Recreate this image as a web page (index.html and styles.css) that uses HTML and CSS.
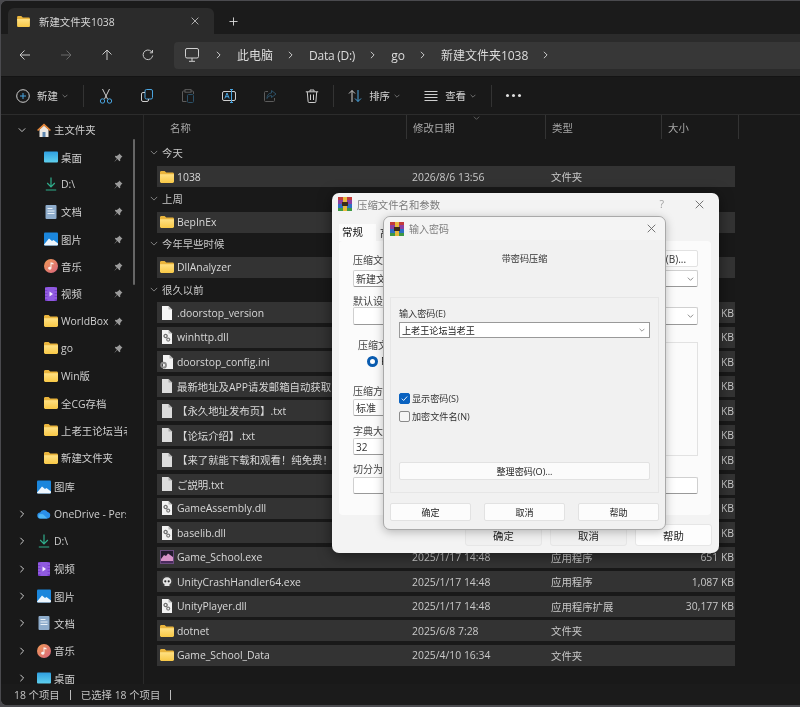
FILE: index.html
```html
<!DOCTYPE html>
<html lang="zh-CN">
<head>
  <meta charset="UTF-8" />
  <meta name="viewport" content="width=device-width, initial-scale=1.0"/>
  <title>新建文件夹1038</title>
  <link rel="stylesheet" href="styles.css">
</head>
<body>

  <!-- shared icons -->
  <svg class="sprite" aria-hidden="true">
    <defs>
      <linearGradient id="skyGrad" x1="0" y1="0" x2="0" y2="1"><stop offset="0" stop-color="#2f9fe0"/><stop offset="1" stop-color="#5fd0ee"/></linearGradient>
      <linearGradient id="musicGrad" x1="0" y1="0" x2="1" y2="1"><stop offset="0" stop-color="#f09a55"/><stop offset="1" stop-color="#d8647e"/></linearGradient>
      <linearGradient id="folderGrad" x1="0" y1="0" x2="0" y2="1"><stop offset="0" stop-color="#ffe184"/><stop offset="1" stop-color="#f8c846"/></linearGradient>
    </defs>
    <symbol id="folder" viewBox="0 0 14 12">
      <path d="M0 1.400C0 .6.6 0 1.400 0h3.200l1.600 1.500h6.400c.8 0 1.400.6 1.400 1.400V5H0z" fill="#e9b43c"/>
      <path d="M0 3.200h14v7.400c0 .8-.6 1.400-1.400 1.400H1.400C.6 12 0 11.400 0 10.600z" fill="url(#folderGrad)"/>
    </symbol>
    <symbol id="file" viewBox="0 0 12 14">
      <path d="M1 0h6.500L11 3.500V14H1z" fill="#f7f7f7"/>
      <path d="M7.500 0v3.500H11z" fill="#bdbdbd"/>
    </symbol>
    <symbol id="txt" viewBox="0 0 12 14">
      <path d="M1 0h6.500L11 3.500V14H1z" fill="#dcdcdc"/>
      <path d="M7.500 0v3.500H11z" fill="#a9a9a9"/>
    </symbol>
    <symbol id="dll" viewBox="0 0 12 14">
      <path d="M1 0h6.500L11 3.500V14H1z" fill="#f2f2f2"/>
      <path d="M7.500 0v3.500H11z" fill="#b5b5b5"/>
      <circle cx="4.600" cy="6" r="1.600" fill="none" stroke="#6d6d6d" stroke-width="1.300"/>
      <circle cx="7.200" cy="9.600" r="1.500" fill="none" stroke="#7d7d7d" stroke-width="1.200"/>
    </symbol>
    <symbol id="ini" viewBox="0 0 14 14">
      <path d="M3 0h6.500L13 3.500V14H3z" fill="#f2f2f2"/>
      <path d="M9.500 0v3.500H13z" fill="#b5b5b5"/>
      <circle cx="3.600" cy="10.200" r="2.400" fill="none" stroke="#8b8b8b" stroke-width="1.900"/>
    </symbol>
    <symbol id="game" viewBox="0 0 14 14">
      <rect x=".5" y=".5" width="13" height="13" fill="#231a2e" stroke="#6b4a7e"/>
      <path d="M1 9l3-4 2 1 2-2.500L13 7v4H1z" fill="#d793c8"/>
      <rect x="1" y="11" width="12" height="2" fill="#4a2a5e"/>
    </symbol>
    <symbol id="skull" viewBox="0 0 14 14">
      <circle cx="7" cy="6.600" r="6.400" fill="#3a3a3a"/>
      <path d="M7 2.200c-2.700 0-4.300 1.800-4.300 4 0 1.500.7 2.500 1.800 3.100V11h5V9.300c1.100-.6 1.800-1.600 1.800-3.100 0-2.200-1.600-4-4.300-4z" fill="#e4e4e4"/>
      <circle cx="5.300" cy="6.300" r="1.100" fill="#2c2c2c"/>
      <circle cx="8.700" cy="6.300" r="1.100" fill="#2c2c2c"/>
    </symbol>
    <symbol id="pin" viewBox="0 0 10 10">
      <path d="M5.800.6l3.600 3.600-1.100.5-1.500 2.300.2 1.500-1 .6L3.700 6.800.9 9.400.6 9.100l2.600-2.800L1 4.100l.6-1 1.500.2 2.300-1.500z" fill="#9a9a9a"/>
    </symbol>
    <symbol id="desktop" viewBox="0 0 14 11">
      <rect width="14" height="11" rx="1" fill="url(#skyGrad)"/>
    </symbol>
    <symbol id="download" viewBox="0 0 12 14">
      <path d="M6 .5v9M2.200 6L6 9.800 9.800 6M.8 13h10.400" fill="none" stroke="#2fae8c" stroke-width="1.200"/>
    </symbol>
    <symbol id="docs" viewBox="0 0 12 14">
      <rect x=".5" width="11" height="14" rx="1" fill="#8eaccb"/>
      <path d="M2.500 3.500h5M2.500 6h7M2.500 8.500h7" stroke="#e9f1f8" stroke-width="1"/>
    </symbol>
    <symbol id="pictures" viewBox="0 0 14 13">
      <rect width="14" height="13" rx="1" fill="#1b86dc"/>
      <path d="M0 12l5-6 3 2.500 1.500-1L14 11v1a1 1 0 0 1-1 1H1a1 1 0 0 1-1-1z" fill="#eef6fd"/>
    </symbol>
    <symbol id="music" viewBox="0 0 14 14">
      <circle cx="7" cy="7" r="7" fill="url(#musicGrad)"/>
      <path d="M6.500 3.200l3 .8v1.500l-2-.5v4.300a1.700 1.500 0 1 1-1-1.400z" fill="#f7f0ee"/>
    </symbol>
    <symbol id="video" viewBox="0 0 12 14">
      <rect width="12" height="14" rx="1" fill="#7a3fd0"/>
      <path d="M0 2h12M0 5h12M0 8h12M0 11h12" stroke="#b68cf0" stroke-width=".8"/>
      <rect x="2.400" width="7.200" height="14" fill="#8f5ae0"/>
      <path d="M4.500 4.500l3.500 2.500-3.500 2.500z" fill="#f3ecfd"/>
    </symbol>
    <symbol id="home" viewBox="0 0 14 14">
      <path d="M2.500 6.500L7 2.500l4.500 4V14h-9z" fill="#ece8e2"/>
      <path d="M5.500 9h3v5h-3z" fill="#5e87b0"/>
      <path d="M0 7l7-6.500L14 7l-1.200 1L7 2.800 1.200 8z" fill="#e8883a"/>
    </symbol>
    <symbol id="cloud" viewBox="0 0 14 10">
      <path d="M3.500 9.500a3 3 0 0 1-.4-6A4.200 4.200 0 0 1 10.600 3a3.300 3.300 0 0 1-.3 6.500z" fill="#2a8fe8"/>
      <path d="M3.500 9.500a2.200 2.200 0 0 1 0-4.400l2.500.2 4.500 4.200z" fill="#4fb6f5"/>
    </symbol>
    <symbol id="rar" viewBox="0 0 14 14">
      <rect width="14" height="3" y="0" fill="#c33a3a"/>
      <rect width="14" height="4" y="3" fill="#8b3fa0"/>
      <rect width="14" height="4" y="7" fill="#2f6ec4"/>
      <rect width="14" height="3" y="11" fill="#3f9a44"/>
      <rect x="5" width="4" height="14" fill="#e8b93d"/>
      <rect x="4" y="5" width="6" height="4" fill="#3b2a1a"/>
    </symbol>
    <symbol id="close" viewBox="0 0 10 10">
      <path d="M.8.8l8.400 8.400M9.200.8L.8 9.200" fill="none" stroke="currentColor" stroke-width="1"/>
    </symbol>
    <symbol id="chev-right" viewBox="0 0 6 10">
      <path d="M1 1l4 4-4 4" fill="none" stroke="currentColor" stroke-width="1.200"/>
    </symbol>
    <symbol id="chev-down" viewBox="0 0 10 6">
      <path d="M1 1l4 4 4-4" fill="none" stroke="currentColor" stroke-width="1.100"/>
    </symbol>
  </svg>

  <div class="window">

    <div class="titlebar">
      <div class="tab">
        <svg class="tab-icon"><use href="#folder"/></svg>
        <span class="tab-text">新建文件夹1038</span>
        <svg class="tab-close"><use href="#close"/></svg>
      </div>
      <svg class="tab-add" viewBox="0 0 10 10"><path d="M5 .5v9M.5 5h9" fill="none" stroke="#ddd" stroke-width="1"/></svg>
    </div>

    <div class="navbar">
      <div class="nav-btn">
        <svg viewBox="0 0 12 12"><path d="M11 6H1M5.500 1.500L1 6l4.500 4.500" fill="none" stroke="#c8c8c8" stroke-width="1"/></svg>
      </div>
      <div class="nav-btn">
        <svg viewBox="0 0 12 12"><path d="M1 6h10M6.500 1.500L11 6l-4.500 4.500" fill="none" stroke="#6a6a6a" stroke-width="1"/></svg>
      </div>
      <div class="nav-btn">
        <svg viewBox="0 0 12 12"><path d="M6 11V1M1.500 5.500L6 1l4.500 4.500" fill="none" stroke="#c8c8c8" stroke-width="1"/></svg>
      </div>
      <div class="nav-btn">
        <svg viewBox="0 0 12 12"><path d="M10.700 6.500A4.800 4.800 0 1 1 9.200 2.300L10.500 3.600M10.500 1v2.800H7.800" fill="none" stroke="#c8c8c8" stroke-width="1"/></svg>
      </div>
      <div class="address">
        <svg class="addr-pc" viewBox="0 0 14 14"><rect x=".5" y=".5" width="13" height="9.500" rx="1.500" fill="none" stroke="#d0d0d0"/><path d="M7 10v3M4 13.300h6" stroke="#d0d0d0"/></svg>
        <svg class="addr-chev"><use href="#chev-right"/></svg>
        <span>此电脑</span>
        <svg class="addr-chev"><use href="#chev-right"/></svg>
        <span class="addr-tight">Data (D:)</span>
        <svg class="addr-chev"><use href="#chev-right"/></svg>
        <span>go</span>
        <svg class="addr-chev"><use href="#chev-right"/></svg>
        <span>新建文件夹1038</span>
        <svg class="addr-chev"><use href="#chev-right"/></svg>
      </div>
    </div>

    <div class="toolbar">
      <div class="tool-text tool-new">
        <svg class="tool-ico" viewBox="0 0 14 14"><circle cx="7" cy="7" r="6.300" fill="none" stroke="#cfcfcf"/><path d="M7 4v6M4 7h6" stroke="#4aa5e0"/></svg>
        <span>新建</span>
        <svg class="tool-chev"><use href="#chev-down"/></svg>
      </div>
      <div class="tool-sep"></div>
      <div class="tool-btn">
        <svg viewBox="0 0 14 16"><path d="M3.500 1l5 10M10.500 1l-5 10" fill="none" stroke="#cfcfcf"/><circle cx="3.500" cy="13" r="2.200" fill="none" stroke="#4aa5e0"/><circle cx="10.500" cy="13" r="2.200" fill="none" stroke="#4aa5e0"/></svg>
      </div>
      <div class="tool-btn">
        <svg viewBox="0 0 14 14"><rect x="5" y=".5" width="7.500" height="9.500" rx="1.500" fill="none" stroke="#4aa5e0"/><path d="M5 3.500H3A1.500 1.500 0 0 0 1.500 5v6A1.500 1.500 0 0 0 3 12.500h4A1.500 1.500 0 0 0 8.500 11v-1" fill="none" stroke="#cfcfcf"/></svg>
      </div>
      <div class="tool-btn">
        <svg viewBox="0 0 14 14"><path d="M4 2H2.500A1 1 0 0 0 1.500 3v9.500h4M10 2h1.500a1 1 0 0 1 1 1v2" fill="none" stroke="#5c5c5c"/><rect x="4" y=".6" width="6" height="2.600" fill="none" stroke="#5c5c5c"/><rect x="6.500" y="5.500" width="6" height="8" rx="1" fill="none" stroke="#2c5168"/></svg>
      </div>
      <div class="tool-btn">
        <svg viewBox="0 0 14 14"><rect x=".5" y="2.500" width="13" height="9" rx="1.500" fill="none" stroke="#cfcfcf"/><path d="M9.500 .5v13M8 .5h3M8 13.500h3" stroke="#4aa5e0" fill="none"/><path d="M2.800 9.500L5 4l2.200 5.500M3.600 7.700h2.800" fill="none" stroke="#4aa5e0"/></svg>
      </div>
      <div class="tool-btn">
        <svg viewBox="0 0 14 14"><path d="M5 2.500H2.500a1 1 0 0 0-1 1v8a1 1 0 0 0 1 1h8a1 1 0 0 0 1-1V9" fill="none" stroke="#5c5c5c"/><path d="M8.500 1.500l4.500 3.500-4.500 3.500V6.500c-2 0-3.500 1-4.500 3 0-3 1.500-5.500 4.500-5.500z" fill="none" stroke="#2c5168"/></svg>
      </div>
      <div class="tool-btn">
        <svg viewBox="0 0 14 14"><path d="M.8 2.800h12.400M5 2.500V1h4v1.500M2.300 3l.8 9.500a1 1 0 0 0 1 1h5.800a1 1 0 0 0 1-1l.8-9.500M5.500 5.500v5.500M8.500 5.500v5.500" fill="none" stroke="#cfcfcf"/></svg>
      </div>
      <div class="tool-sep"></div>
      <div class="tool-text tool-sort">
        <svg class="tool-ico" viewBox="0 0 14 14"><path d="M4 13V1.500M1 4.500l3-3 3 3" fill="none" stroke="#cfcfcf"/><path d="M10 1v11.500M7 9.500l3 3 3-3" fill="none" stroke="#4aa5e0"/></svg>
        <span>排序</span>
        <svg class="tool-chev"><use href="#chev-down"/></svg>
      </div>
      <div class="tool-text tool-view">
        <svg class="tool-ico" viewBox="0 0 14 14"><path d="M.5 2.500h13M.5 5.500h13M.5 8.500h13M.5 11.500h13" stroke="#cfcfcf"/></svg>
        <span>查看</span>
        <svg class="tool-chev"><use href="#chev-down"/></svg>
      </div>
      <div class="tool-sep"></div>
      <div class="tool-more"><i></i><i></i><i></i></div>
    </div>

    <div class="main">
      <div class="sidebar">
        <div class="scroll-thumb"></div>

        <div class="side-row"><svg class="side-chev"><use href="#chev-down"/></svg><svg class="side-ico"><use href="#home"/></svg><span class="side-label">主文件夹</span></div>

        <div class="side-row sub"><svg class="side-ico"><use href="#desktop"/></svg><span class="side-label">桌面</span><svg class="side-pin"><use href="#pin"/></svg></div>
        <div class="side-row sub"><svg class="side-ico"><use href="#download"/></svg><span class="side-label">D:\</span><svg class="side-pin"><use href="#pin"/></svg></div>
        <div class="side-row sub"><svg class="side-ico"><use href="#docs"/></svg><span class="side-label">文档</span><svg class="side-pin"><use href="#pin"/></svg></div>
        <div class="side-row sub"><svg class="side-ico"><use href="#pictures"/></svg><span class="side-label">图片</span><svg class="side-pin"><use href="#pin"/></svg></div>
        <div class="side-row sub"><svg class="side-ico"><use href="#music"/></svg><span class="side-label">音乐</span><svg class="side-pin"><use href="#pin"/></svg></div>
        <div class="side-row sub"><svg class="side-ico"><use href="#video"/></svg><span class="side-label">视频</span><svg class="side-pin"><use href="#pin"/></svg></div>
        <div class="side-row sub"><svg class="side-ico"><use href="#folder"/></svg><span class="side-label">WorldBox</span><svg class="side-pin"><use href="#pin"/></svg></div>
        <div class="side-row sub"><svg class="side-ico"><use href="#folder"/></svg><span class="side-label">go</span><svg class="side-pin"><use href="#pin"/></svg></div>
        <div class="side-row sub"><svg class="side-ico"><use href="#folder"/></svg><span class="side-label">Win版</span></div>
        <div class="side-row sub"><svg class="side-ico"><use href="#folder"/></svg><span class="side-label">全CG存档</span></div>
        <div class="side-row sub"><svg class="side-ico"><use href="#folder"/></svg><span class="side-label">上老王论坛当老王</span></div>
        <div class="side-row sub"><svg class="side-ico"><use href="#folder"/></svg><span class="side-label">新建文件夹</span></div>

        <div class="side-row top-gap"><svg class="side-chev none"></svg><svg class="side-ico"><use href="#pictures"/></svg><span class="side-label">图库</span></div>
        <div class="side-row"><svg class="side-chev"><use href="#chev-right"/></svg><svg class="side-ico"><use href="#cloud"/></svg><span class="side-label">OneDrive - Personal</span></div>
        <div class="side-row"><svg class="side-chev"><use href="#chev-right"/></svg><svg class="side-ico"><use href="#download"/></svg><span class="side-label">D:\</span></div>
        <div class="side-row"><svg class="side-chev"><use href="#chev-right"/></svg><svg class="side-ico"><use href="#video"/></svg><span class="side-label">视频</span></div>
        <div class="side-row"><svg class="side-chev"><use href="#chev-right"/></svg><svg class="side-ico"><use href="#pictures"/></svg><span class="side-label">图片</span></div>
        <div class="side-row"><svg class="side-chev"><use href="#chev-right"/></svg><svg class="side-ico"><use href="#docs"/></svg><span class="side-label">文档</span></div>
        <div class="side-row"><svg class="side-chev"><use href="#chev-right"/></svg><svg class="side-ico"><use href="#music"/></svg><span class="side-label">音乐</span></div>
        <div class="side-row"><svg class="side-chev"><use href="#chev-right"/></svg><svg class="side-ico"><use href="#desktop"/></svg><span class="side-label">桌面</span></div>
      </div>

      <div class="content">
        <div class="col-head">
          <div class="col col-name">名称</div>
          <div class="col col-date">修改日期</div>
          <div class="col col-type">类型</div>
          <div class="col col-size">大小</div>
          <svg class="sort-mark"><use href="#chev-down"/></svg>
        </div>

        <div class="list">
          <div class="group"><svg><use href="#chev-down"/></svg>今天</div>
          <div class="row"><span class="name"><svg><use href="#folder"/></svg>1038</span><span>2026/8/6 13:56</span><span>文件夹</span><span class="size"></span></div>

          <div class="group"><svg><use href="#chev-down"/></svg>上周</div>
          <div class="row"><span class="name"><svg><use href="#folder"/></svg>BepInEx</span><span></span><span></span><span class="size"></span></div>

          <div class="group"><svg><use href="#chev-down"/></svg>今年早些时候</div>
          <div class="row"><span class="name"><svg><use href="#folder"/></svg>DllAnalyzer</span><span></span><span></span><span class="size"></span></div>

          <div class="group"><svg><use href="#chev-down"/></svg>很久以前</div>
          <div class="row"><span class="name"><svg><use href="#file"/></svg>.doorstop_version</span><span></span><span></span><span class="size">KB</span></div>
          <div class="row"><span class="name"><svg><use href="#dll"/></svg>winhttp.dll</span><span></span><span></span><span class="size">KB</span></div>
          <div class="row"><span class="name"><svg><use href="#ini"/></svg>doorstop_config.ini</span><span></span><span></span><span class="size">KB</span></div>
          <div class="row"><span class="name"><svg><use href="#txt"/></svg>最新地址及APP请发邮箱自动获取</span><span></span><span></span><span class="size">KB</span></div>
          <div class="row"><span class="name"><svg><use href="#txt"/></svg>【永久地址发布页】.txt</span><span></span><span></span><span class="size">KB</span></div>
          <div class="row"><span class="name"><svg><use href="#txt"/></svg>【论坛介绍】.txt</span><span></span><span></span><span class="size">KB</span></div>
          <div class="row"><span class="name"><svg><use href="#txt"/></svg>【来了就能下载和观看！纯免费！</span><span></span><span></span><span class="size">KB</span></div>
          <div class="row"><span class="name"><svg><use href="#txt"/></svg>ご説明.txt</span><span></span><span></span><span class="size">KB</span></div>
          <div class="row"><span class="name"><svg><use href="#dll"/></svg>GameAssembly.dll</span><span></span><span></span><span class="size">KB</span></div>
          <div class="row"><span class="name"><svg><use href="#dll"/></svg>baselib.dll</span><span></span><span></span><span class="size">KB</span></div>
          <div class="row"><span class="name"><svg><use href="#game"/></svg>Game_School.exe</span><span>2025/1/17 14:48</span><span>应用程序</span><span class="size">651 KB</span></div>
          <div class="row"><span class="name"><svg><use href="#skull"/></svg>UnityCrashHandler64.exe</span><span>2025/1/17 14:48</span><span>应用程序</span><span class="size">1,087 KB</span></div>
          <div class="row"><span class="name"><svg><use href="#dll"/></svg>UnityPlayer.dll</span><span>2025/1/17 14:48</span><span>应用程序扩展</span><span class="size">30,177 KB</span></div>
          <div class="row"><span class="name"><svg><use href="#folder"/></svg>dotnet</span><span>2025/6/8 7:28</span><span>文件夹</span><span class="size"></span></div>
          <div class="row"><span class="name"><svg><use href="#folder"/></svg>Game_School_Data</span><span>2025/4/10 16:34</span><span>文件夹</span><span class="size"></span></div>
        </div>
      </div>
    </div>

    <div class="statusbar">
      <span>18 个项目</span><i></i><span>已选择 18 个项目</span><i></i>
    </div>
  </div>

  <!-- archive parameters dialog -->
  <div class="dialog dlg-archive">
    <div class="dlg-title">
      <svg class="dlg-logo"><use href="#rar"/></svg>
      <span class="dlg-title-text">压缩文件名和参数</span>
      <span class="dlg-help">?</span>
      <svg class="dlg-close"><use href="#close"/></svg>
    </div>
    <div class="tabs"><span class="tab-on">常规</span><span class="tab-off">高级</span></div>
    <div class="panel">
      <div class="field-top"><span class="lbl lbl-name">压缩文件名(A)</span><div class="box btn-box">浏览(B)...</div></div>
      <div class="box combo name-combo">新建文件夹1038.rar<svg><use href="#chev-down"/></svg></div>
      <div class="lbl lbl-preset">默认设置</div>
      <div class="box combo preset-combo"><svg><use href="#chev-down"/></svg></div>
      <div class="two-col">
        <div class="left-col">
          <div class="fmt-box">
            <span class="lbl">压缩文件格式</span>
            <div class="radio-row"><i class="radio"></i>RAR</div>
          </div>
          <div class="lbl lbl-method">压缩方式(C)</div>
          <div class="box">标准</div>
          <div class="lbl lbl-dict">字典大小(I)</div>
          <div class="box">32</div>
        </div>
        <div class="opt-box"></div>
      </div>
      <div class="lbl lbl-split">切分为分卷(V)</div>
      <div class="box"></div>
    </div>
    <div class="dlg-buttons">
      <div class="btn dim">确定</div>
      <div class="btn dim">取消</div>
      <div class="btn">帮助</div>
    </div>
  </div>

  <!-- password dialog -->
  <div class="dialog dlg-password">
    <div class="pw-title">
      <svg class="dlg-logo"><use href="#rar"/></svg>
      <span class="dlg-title-text">输入密码</span>
      <svg class="dlg-close"><use href="#close"/></svg>
    </div>
    <div class="pw-body">
      <div class="pw-heading">带密码压缩</div>
      <div class="pw-panel">
        <div class="pw-label">输入密码(E)</div>
        <div class="pw-input">上老王论坛当老王<svg><use href="#chev-down"/></svg></div>
        <label class="check check-first"><i class="tick on"><svg viewBox="0 0 10 10"><path d="M2 5.200l2 2 4-4.400" fill="none" stroke="#fff" stroke-width="1"/></svg></i>显示密码(S)</label>
        <label class="check"><i class="tick"></i>加密文件名(N)</label>
        <div class="pw-manage">整理密码(O)...</div>
      </div>
      <div class="pw-buttons">
        <div class="pw-btn">确定</div>
        <div class="pw-btn">取消</div>
        <div class="pw-btn">帮助</div>
      </div>
    </div>
  </div>

</body>
</html>
```

FILE: styles.css
```css
* {
  box-sizing: border-box;
}

body {
  margin: 0;
  height: 707px;
  overflow: hidden;
  background: #4a4a4e;
  font-family: "Open Sans", "Noto Sans CJK SC", sans-serif;
  font-size: 10.4px;
  color: #d2d2d2;
  position: relative;
  filter: blur(0.3px);
}

.sprite {
  position: absolute;
  width: 0;
  height: 0;
}

.window {
  margin: 1px 0 0 1px;
  height: 704px;
  background: #191919;
  border-radius: 6px 0 0 6px;
  overflow: hidden;
  display: flex;
  flex-direction: column;
}

/* title bar and tab */
.titlebar {
  height: 33px;
  flex: none;
  background: #1b1b1b;
  display: flex;
  align-items: flex-end;
  padding-left: 7px;
}

.tab {
  width: 206px;
  height: 26px;
  background: #2b2b2b;
  border-radius: 6px 6px 0 0;
  display: flex;
  align-items: center;
  padding: 0 0 0 9px;
}

.tab-icon {
  width: 13px;
  height: 11px;
  margin-right: 9px;
}

.tab-text {
  flex: 1;
  color: #d8d8d8;
}

.tab-close {
  width: 8px;
  height: 8px;
  margin-right: 15px;
  color: #d0d0d0;
}

.tab-add {
  width: 9px;
  height: 9px;
  margin: 0 0 8px 15px;
}

/* back / forward row */
.navbar {
  height: 43px;
  flex: none;
  background: #2b2b2b;
  border-bottom: 1px solid #141414;
  display: flex;
  align-items: center;
  padding-left: 3px;
}

.nav-btn {
  width: 41px;
  display: flex;
  justify-content: center;
}

.nav-btn svg {
  width: 12px;
  height: 12px;
}

.address {
  margin-left: 6px;
  flex: 1;
  height: 27px;
  background: #373737;
  border-radius: 4px 0 0 4px;
  display: flex;
  align-items: center;
  padding-left: 11px;
  font-size: 12px;
  color: #dcdcdc;
}

.addr-pc {
  width: 14px;
  height: 14px;
}

.addr-chev {
  width: 5px;
  height: 8px;
  margin: 0 16px 0 15px;
  color: #d0d0d0;
}

.addr-pc + .addr-chev {
  margin-left: 17px;
}

.addr-tight {
  letter-spacing: -0.25px;
}

/* command bar */
.toolbar {
  height: 38px;
  flex: none;
  background: #191919;
  border-bottom: 1px solid #2c2c2c;
  display: flex;
  align-items: center;
  padding-left: 15px;
}

.tool-text {
  display: flex;
  align-items: center;
  color: #d4d4d4;
}

.tool-ico {
  width: 14px;
  height: 14px;
  margin-right: 7px;
}

.tool-chev {
  width: 6px;
  height: 4px;
  margin-left: 4px;
  color: #9a9a9a;
}

.tool-new {
  width: 67px;
}

.tool-sep {
  width: 1px;
  height: 22px;
  background: #333;
}

.tool-btn {
  width: 41.2px;
  display: flex;
  justify-content: center;
}

.tool-sep + .tool-btn {
  margin-left: 1px;
}

.tool-btn + .tool-sep {
  margin-left: 1px;
}

.tool-btn svg {
  width: 14px;
  height: 16px;
}

.tool-sort {
  width: 76px;
  padding-left: 14px;
}

.tool-view {
  width: 81px;
  padding-left: 14px;
}

.tool-more {
  display: flex;
  gap: 3px;
  margin-left: 14px;
}

.tool-more i {
  width: 3px;
  height: 3px;
  border-radius: 50%;
  background: #e0e0e0;
}

/* nav pane */
.main {
  flex: 1;
  min-height: 0;
  display: flex;
  overflow: hidden;
}

.sidebar {
  width: 143px;
  flex: none;
  border-right: 1px solid #2a2a2a;
  position: relative;
  padding-top: 1px;
}

.scroll-thumb {
  position: absolute;
  left: 132px;
  top: 24px;
  width: 2px;
  height: 146px;
  background: #666;
  border-radius: 1px;
}

.side-row {
  height: 27.35px;
  display: flex;
  align-items: center;
  padding-left: 17px;
}

.side-row.sub {
  padding-left: 43px;
}

.side-row.top-gap {
  margin-top: 1.5px;
}

.side-chev {
  width: 8px;
  height: 8px;
  margin-right: 11px;
  flex: none;
  color: #d8d8d8;
}

.side-ico {
  width: 14px;
  height: 14px;
  margin-right: 3px;
  flex: none;
}

.side-label {
  width: 72px;
  overflow: hidden;
  white-space: nowrap;
  color: #cfcfcf;
  flex: none;
}

.sub .side-label {
  width: 66px;
}

.side-pin {
  width: 9px;
  height: 9px;
  margin-left: -13px;
  flex: none;
}

/* file list */
.content {
  flex: 1;
  min-width: 0;
  position: relative;
}

.col-head {
  height: 25px;
  display: flex;
  color: #a8a8a8;
}

.col {
  height: 24px;
  border-right: 1px solid #333;
  padding: 5px 0 0 6px;
}

.col-name {
  width: 263px;
  padding-left: 26px;
}

.col-date {
  width: 139px;
}

.col-type {
  width: 116px;
}

.col-size {
  width: 77px;
}

.sort-mark {
  position: absolute;
  left: 329px;
  top: 1px;
  width: 7px;
  height: 4px;
  color: #777;
}

.list {
  display: flex;
  flex-direction: column;
  gap: 3.45px;
  padding: 5px 0 0 13px;
}

.group {
  height: 17.6px;
  display: flex;
  align-items: center;
  gap: 4px;
  margin-left: -7px;
  padding-bottom: 2px;
  color: #c8c8c8;
}

.group svg {
  width: 8px;
  height: 5px;
  color: #8c8c8c;
}

.row {
  width: 578px;
  height: 21px;
  background: #333;
  display: grid;
  grid-template-columns: 255px 139px 110px 1fr;
  align-items: center;
  color: #c8c8c8;
  white-space: nowrap;
}

.name {
  display: flex;
  align-items: center;
  padding-left: 3px;
  color: #d8d8d8;
}

.name svg {
  width: 14px;
  height: 14px;
  margin-right: 3px;
  flex: none;
}

.size {
  text-align: right;
  padding-right: 1px;
}

/* status */
.statusbar {
  height: 21px;
  flex: none;
  background: #1b1b1b;
  display: flex;
  align-items: center;
  padding-left: 13px;
  color: #c4c4c4;
}

.statusbar i {
  width: 1px;
  height: 10px;
  background: #bbb;
  margin: 0 10px;
}

/* dialogs */
.dialog {
  position: absolute;
  border-radius: 7px;
  background: #f3f3f3;
  color: #222;
}

.dlg-archive {
  left: 332px;
  top: 193px;
  width: 387px;
  height: 360px;
  box-shadow: 0 2px 14px rgba(0, 0, 0, 0.5);
}

.dlg-title {
  height: 22px;
  margin-bottom: 2px;
  display: flex;
  align-items: center;
  padding-left: 6px;
}

.dlg-logo {
  width: 14px;
  height: 14px;
  margin-right: 5px;
  flex: none;
}

.dlg-title-text {
  flex: 1;
  color: #7c7c7c;
}

.dlg-help {
  color: #a0a0a0;
  margin-right: 31px;
}

.dlg-close {
  width: 9px;
  height: 9px;
  margin-right: 15px;
  color: #666;
}

.tabs {
  height: 24px;
  display: flex;
  align-items: flex-end;
  padding-left: 7px;
}

.tab-on {
  width: 37px;
  height: 17px;
  background: #fbfbfb;
  padding: 0 0 0 3px;
  color: #111;
  font-size: 10.5px;
}

.tab-off {
  padding: 0 0 1px 4px;
}

.panel {
  margin: 0 8px 0 7px;
  height: 274px;
  background: #fbfbfb;
  border-radius: 4px;
  padding: 9px 13px 0 14px;
  font-size: 10px;
}

.lbl {
  color: #444;
  display: block;
}

.lbl-name {
  padding-top: 2px;
}

.box {
  height: 17px;
  background: #fff;
  border: 1px solid #d0d0d0;
  border-bottom-color: #999;
  border-radius: 2px;
  padding-left: 2px;
  display: flex;
  align-items: center;
  justify-content: space-between;
  color: #333;
}

.combo svg {
  width: 7px;
  height: 4px;
  margin-right: 3px;
  margin-left: auto;
  color: #666;
}

.field-top {
  display: flex;
  justify-content: space-between;
  height: 20px;
}

.btn-box {
  width: 66px;
  border-color: #e2e2e2;
  justify-content: center;
}

.lbl-preset {
  margin-top: 6px;
  height: 14px;
}

.preset-combo {
  height: 18px;
}

.two-col {
  display: grid;
  grid-template-columns: 180px 1fr;
  gap: 14px;
  margin-top: 17px;
  height: 114px;
}

.fmt-box {
  height: 40px;
  padding-left: 5px;
  margin-top: -5px;
}

.radio-row {
  display: flex;
  align-items: center;
  gap: 3px;
  margin: 2px 0 0 9px;
}

.radio {
  width: 11px;
  height: 11px;
  border-radius: 50%;
  background: #fff;
  border: 3px solid #0a5cb0;
}

.lbl-method {
  margin-top: 6px;
  height: 16px;
}

.lbl-dict {
  margin-top: 7px;
  height: 15px;
}

.opt-box {
  border: 1px solid #e2e2e2;
}

.lbl-split {
  margin-top: 5px;
  height: 16px;
}

.dlg-buttons {
  display: flex;
  justify-content: flex-end;
  gap: 8px;
  margin: 9px 7px 0 0;
}

.btn {
  width: 77px;
  height: 22px;
  background: #fdfdfd;
  border: 1px solid #e6e6e6;
  border-radius: 3px;
  display: flex;
  align-items: center;
  justify-content: center;
}

.btn.dim {
  background: #f0f0f0;
}

.dlg-password {
  left: 383px;
  top: 216px;
  width: 283px;
  height: 314px;
  background: #f1f1f1;
  border: 1px solid #a9a9a9;
  box-shadow: 0 2px 10px rgba(0, 0, 0, 0.25);
  font-size: 9.1px;
}

.pw-title {
  height: 23px;
  margin-bottom: 2px;
  background: #f4f4f4;
  border-radius: 7px 7px 0 0;
  display: flex;
  align-items: center;
  padding-left: 6px;
  font-size: 10px;
}

.pw-title .dlg-close {
  margin-right: 9px;
}

.pw-body {
  padding: 0 6px;
}

.pw-heading {
  height: 55px;
  text-align: center;
  padding-top: 9px;
  color: #333;
}

.pw-panel {
  height: 196px;
  border: 1px solid #e6e6e6;
  padding: 8px 8px 0;
}

.pw-label {
  height: 16px;
  color: #333;
}

.pw-input {
  height: 16px;
  background: #fff;
  border: 1px solid #999;
  display: flex;
  align-items: center;
  padding-left: 2px;
  color: #222;
}

.pw-input svg {
  width: 6px;
  height: 4px;
  margin-left: auto;
  margin-right: 4px;
  color: #666;
}

.check {
  display: flex;
  align-items: center;
  gap: 2px;
  height: 18px;
  color: #333;
}

.check-first {
  margin-top: 51px;
}

.tick {
  width: 11px;
  height: 11px;
  border-radius: 2px;
  border: 1px solid #8a8a8a;
  background: #f6f6f6;
}

.tick.on {
  background: #0a62c0;
  border-color: #0a62c0;
  display: flex;
}

.tick svg {
  width: 9px;
  height: 9px;
}

.pw-manage {
  height: 18px;
  margin-top: 37px;
  background: #fbfbfb;
  border: 1px solid #e2e2e2;
  border-radius: 2px;
  display: flex;
  align-items: center;
  justify-content: center;
  color: #222;
}

.pw-buttons {
  display: flex;
  justify-content: space-between;
  margin-top: 10px;
}

.pw-btn {
  width: 81px;
  height: 18px;
  background: #fcfcfc;
  border: 1px solid #e2e2e2;
  border-radius: 2px;
  display: flex;
  align-items: center;
  justify-content: center;
  color: #222;
}
```
